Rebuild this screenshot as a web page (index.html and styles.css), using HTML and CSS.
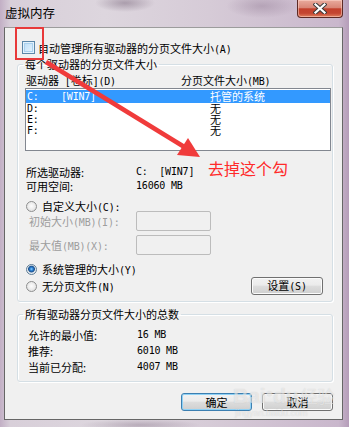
FILE: index.html
```html
<!DOCTYPE html>
<html lang="zh-CN">
<head>
    <meta charset="UTF-8">
    <meta name="viewport" content="width=device-width, initial-scale=1.0">
    <title>虚拟内存</title>

<link rel="stylesheet" href="styles.css">
</head>
<body>
    <div class="window">
        <!-- title bar -->
        <div class="titlebar">
            <span class="title">虚拟内存</span>
            <span class="close-btn">
                <svg width="14" height="11" viewBox="0 0 14 11">
                    <path d="M2.5 1.5 L11.5 9.5 M11.5 1.5 L2.5 9.5" stroke="#3b3b3b" stroke-width="4.2" stroke-linecap="square"/>
                    <path d="M2.5 1.5 L11.5 9.5 M11.5 1.5 L2.5 9.5" stroke="#fff" stroke-width="2.2" stroke-linecap="square"/>
                </svg>
            </span>
        </div>

        <div class="client">
            <label class="auto-row">
                <span class="checkbox"></span>
                <span class="auto-text">自动管理所有驱动器的分页文件大小<span class="en">(A)</span></span>
            </label>

            <!-- per drive -->
            <fieldset class="group group-drives">
                <legend>每个驱动器的分页文件大小</legend>
                <div class="list-head">
                    <span class="col-drive">驱动器<span class="en"> [</span>卷标<span class="en">](D)</span></span>
                    <span>分页文件大小<span class="en">(MB)</span></span>
                </div>
                <div class="listbox">
                    <div class="row selected"><span class="en">C:</span><span class="en">[WIN7]</span><span>托管的系统</span></div>
                    <div class="row"><span class="en">D:</span><span></span><span>无</span></div>
                    <div class="row"><span class="en">E:</span><span></span><span>无</span></div>
                    <div class="row"><span class="en">F:</span><span></span><span>无</span></div>
                </div>

                <div class="info">
                    <div class="info-row"><span class="label">所选驱动器:</span><span class="en value">C:  [WIN7]</span></div>
                    <div class="info-row"><span class="label">可用空间:</span><span class="en value">16060 MB</span></div>
                </div>

                <div class="radio-row custom-row">
                    <span class="radio"></span>
                    <span>自定义大小<span class="en">(C):</span></span>
                </div>
                <div class="size-row">
                    <span class="label">初始大小<span class="en">(MB)(I):</span></span>
                    <span class="textbox"></span>
                </div>
                <div class="size-row second">
                    <span class="label">最大值<span class="en">(MB)(X):</span></span>
                    <span class="textbox"></span>
                </div>
                <div class="radio-row system-row">
                    <span class="radio checked"></span>
                    <span>系统管理的大小<span class="en">(Y)</span></span>
                </div>
                <div class="radio-row none-row">
                    <span class="radio"></span>
                    <span>无分页文件<span class="en">(N)</span></span>
                    <button class="btn btn-set">设置<span class="en">(S)</span></button>
                </div>
            </fieldset>

            <!-- totals -->
            <fieldset class="group group-total">
                <legend>所有驱动器分页文件大小的总数</legend>
                <div class="total-row first"><span class="label">允许的最小值:</span><span class="en value">16 MB</span></div>
                <div class="total-row"><span class="label">推荐:</span><span class="en value">6010 MB</span></div>
                <div class="total-row"><span class="label">当前已分配:</span><span class="en value">4007 MB</span></div>
            </fieldset>

            <div class="buttons">
                <button class="btn btn-default">确定</button>
                <button class="btn">取消</button>
            </div>
        </div>

        <!-- annotation layer -->
        <div class="mark"></div>
        <svg class="arrow" width="349" height="427" viewBox="0 0 349 427">
            <line x1="46" y1="62" x2="186" y2="148" stroke="#f03b3b" stroke-width="4.5"/>
            <polygon points="200,157 188,138 177,155" fill="#f03b3b"/>
        </svg>
        <div class="note">去掉这个勾</div>

        <div class="watermark">
            <span class="wm-logo">Bai<span class="wm-paw">&#9679;</span>du</span><span class="wm-cn">经验</span>
            <div class="wm-url">jingyan.baidu.com</div>
        </div>
    </div>
</body>
</html>
```

FILE: styles.css
```css
* {
    box-sizing: border-box;
}

html, body {
    margin: 0;
}

body {
    width: 349px;
    height: 427px;
    overflow: hidden;
    font-family: "Noto Sans CJK SC", "DejaVu Sans", sans-serif;
    font-size: 11px;
    color: #000;
}

.en {
    font-family: "DejaVu Sans Mono", monospace;
    font-size: 10px;
    letter-spacing: -0.2px;
    white-space: pre;
}

.window {
    position: relative;
    width: 349px;
    height: 427px;
    display: flex;
    flex-direction: column;
    background:
        radial-gradient(ellipse 30px 9px at 125px 3px, rgba(110, 90, 112, .45), transparent),
        radial-gradient(ellipse 36px 12px at 262px 6px, rgba(130, 105, 132, .35), transparent),
        radial-gradient(ellipse 60px 6px at 140px 425px, rgba(120, 100, 122, .35), transparent),
        linear-gradient(90deg, #c2afc5 0, #d8cfd9 3%, #ddd6de 30%, #d6cbd7 60%, #c9b7cc 97%, #b59db9 100%);
}

/* title bar */
.titlebar {
    height: 27px;
    display: flex;
    align-items: flex-start;
    flex-shrink: 0;
}

.title {
    padding: 6px 0 0 5px;
    font-size: 12.5px;
    line-height: 14px;
}

.close-btn {
    margin-left: auto;
    margin-right: 6px;
    width: 46px;
    height: 18px;
    border: 1px solid #5d2a24;
    border-top: none;
    border-radius: 0 0 4px 4px;
    background: linear-gradient(#e9ab9d, #d98676 45%, #c3402b 52%, #c44631 78%, #e0805f);
    box-shadow: inset 0 0 0 1px rgba(255, 220, 210, .5);
    display: flex;
    align-items: center;
    justify-content: center;
}

/* dialog body */
.client {
    margin: 0 6px 0 4px;
    height: 393px;
    flex-shrink: 0;
    overflow: hidden;
    background: #f0f0f0;
    border: 1px solid #666;
    border-top-color: #9c9c9c;
    display: flex;
    flex-direction: column;
}

.auto-row {
    margin-top: 13px;
    padding-left: 17px;
    display: flex;
    align-items: flex-start;
    gap: 3px;
    height: 13px;
}

.checkbox {
    width: 13px;
    height: 13px;
    border: 1px solid #5b87a9;
    background: linear-gradient(135deg, #b9dcf6, #e9f5fe);
    box-shadow: inset 0 0 0 1px #e4f2fc, inset 0 0 0 2px #a9d1ef;
}

.auto-text {
    margin-top: 1px;
    line-height: 13px;
}

/* group boxes */
.group {
    margin: 0 0 0 12px;
    width: 316px;
    min-width: 0;
    padding: 0 0 6px 0;
    border: 1px solid #d5dfe5;
    border-radius: 3px;
    box-shadow: inset 1px 1px 0 #fff, 1px 1px 0 #fff;
}

.group legend {
    margin-left: 5px;
    padding: 0 2px;
    line-height: 12px;
}

.group-drives {
    margin-top: 4px;
}

.list-head {
    margin-top: 4px;
    padding-left: 8px;
    display: flex;
    line-height: 12px;
    height: 12px;
}

.col-drive {
    width: 155px;
}

.listbox {
    margin: 2px 0 0 7px;
    width: 306px;
    height: 63px;
    padding-top: 1px;
    background: #fff;
    border: 1px solid #828790;
}

.row {
    display: grid;
    grid-template-columns: 34px 149px 1fr;
    padding-left: 1px;
    height: 11px;
    line-height: 11px;
}

.row.selected {
    height: 13px;
    line-height: 13px;
    background: #3399ff;
    color: #fff;
}

.info {
    margin-top: 14px;
}

.info-row {
    display: flex;
    padding-left: 8px;
    height: 14px;
    line-height: 14px;
}

.info-row .label {
    width: 110px;
}

.radio-row {
    display: flex;
    align-items: center;
    gap: 5px;
    padding-left: 8px;
    height: 12px;
}

.custom-row {
    margin-top: 7px;
}

.system-row {
    margin-top: 8px;
}

.none-row {
    margin-top: 2px;
    height: 18px;
}

.radio {
    width: 11px;
    height: 11px;
    border-radius: 50%;
    border: 1px solid #8e8f8f;
    background: radial-gradient(circle at 50% 45%, #fdfdfd 0, #e8e8e8 60%, #d2d2d2 100%);
}

.radio.checked {
    border-color: #5f7d96;
    background: radial-gradient(circle at 50% 45%, #8fd0ff 0, #2a7fd0 1.6px, #1b4f8c 3px, #dfe6ec 3.8px, #f6f6f6 100%);
}

.size-row {
    margin-top: -1px;
    display: flex;
    align-items: center;
    padding-left: 11px;
    height: 20px;
    color: #9d9d9d;
}

.size-row.second {
    margin-top: 4px;
}

.size-row .label {
    width: 107px;
}

.textbox {
    width: 75px;
    height: 20px;
    border: 1px solid #bcbcbc;
    border-radius: 2px;
    background: #f0f0f0;
}

.group-total {
    margin-top: 6px;
}

.total-row {
    display: flex;
    padding-left: 10px;
    height: 16px;
    line-height: 16px;
}

.total-row.first {
    margin-top: 7px;
}

.total-row .label {
    width: 109px;
}

/* buttons */
.btn {
    font-family: inherit;
    font-size: 11px;
    color: #000;
    width: 71px;
    height: 18px;
    padding: 0;
    line-height: 15px;
    border: 1px solid #707070;
    border-radius: 3px;
    background: linear-gradient(#f2f2f2 0, #ebebeb 45%, #dddddd 50%, #cfcfcf 100%);
    box-shadow: inset 0 0 0 1px #fbfbfb;
}

.btn-set {
    margin-left: auto;
    margin-right: 9px;
    width: 72px;
}

.btn-default {
    border-color: #3c7fb1;
    box-shadow: inset 0 0 0 1px #8fd1f5;
}

.buttons {
    margin-top: 11px;
    padding-right: 9px;
    display: flex;
    justify-content: flex-end;
    gap: 10px;
}

/* annotations drawn over the dialog */
.mark {
    position: absolute;
    left: 15px;
    top: 27px;
    width: 29px;
    height: 33px;
    border: 2px solid #e8393a;
}

.arrow {
    position: absolute;
    left: 0;
    top: 0;
    pointer-events: none;
}

.note {
    position: absolute;
    left: 208px;
    top: 160px;
    font-size: 16px;
    line-height: 17px;
    color: #ff2a2a;
}

.watermark {
    position: absolute;
    left: 233px;
    top: 382px;
    color: rgba(255, 255, 255, .5);
    text-shadow: 0 0 1px rgba(120, 120, 120, .3);
    pointer-events: none;
}

.wm-logo {
    font-family: "Liberation Sans", sans-serif;
    font-weight: bold;
    font-size: 21px;
    line-height: 22px;
}

.wm-paw {
    font-size: 12px;
    vertical-align: 6px;
}

.wm-cn {
    font-size: 17px;
    margin-left: 2px;
}

.wm-url {
    font-family: "Liberation Sans", sans-serif;
    font-size: 9px;
    line-height: 10px;
    margin-left: 2px;
}
```
